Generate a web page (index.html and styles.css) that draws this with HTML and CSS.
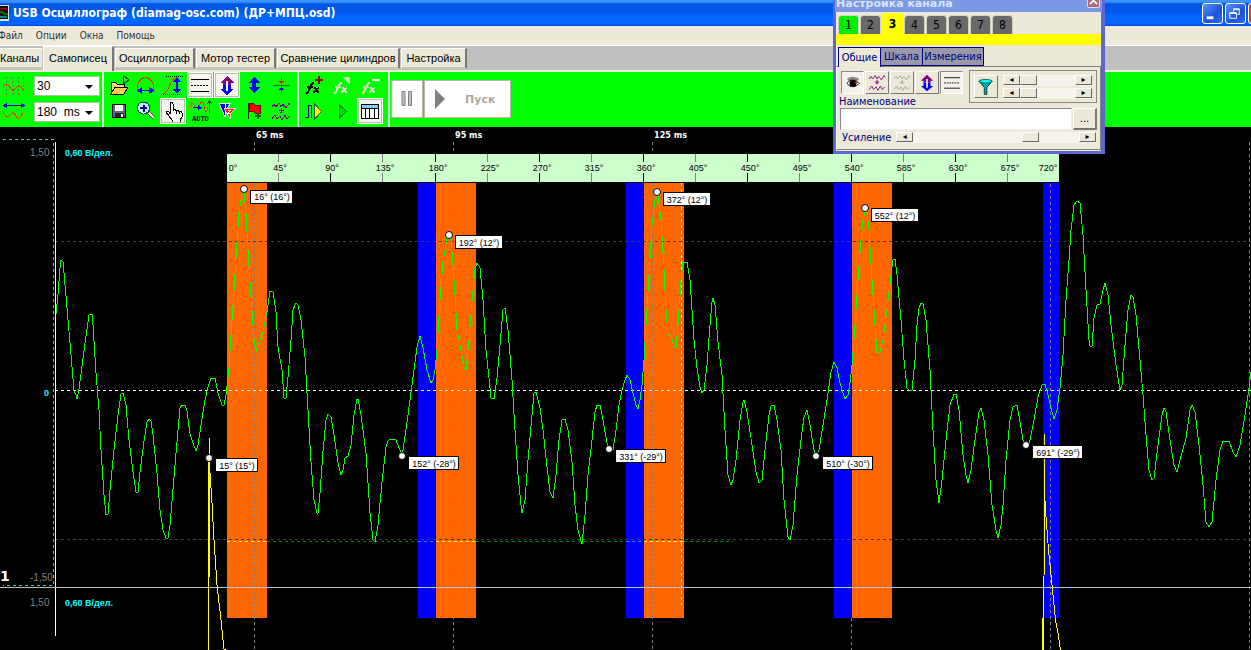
FILE: index.html
```html
<!DOCTYPE html>
<html lang="ru">
<head>
<meta charset="utf-8">
<title>USB Осциллограф</title>
<link rel="stylesheet" href="styles.css">
</head>
<body>
<svg class="defs" width="0" height="0" aria-hidden="true">
  <symbol id="updown" viewBox="0 0 24 24"><path d="M12 3l7 7h-3v2h-3v-4h-2v4H8v-2H5z" fill="#800080"/><path d="M12 22l7-6h-3v-4h-3v6h-2v-6H8v4H5z" fill="#00f"/></symbol>
  <symbol id="lines" viewBox="0 0 24 24"><path d="M3 6.500h18M3 18.500h18" stroke="#000"/><path d="M3 12.500h18" stroke="#000" stroke-dasharray="2 1"/></symbol>
  <symbol id="waves" viewBox="0 0 24 24"><path d="M3 8l2-3 2 3 3-4 2 4 2-3 3 4 3-5 1 2M3 20l3-4 2 4 3-3 2 4 3-5 2 4 3-3M12 9v5M9.500 11.500h5M11 13h2" fill="none" stroke="currentColor"/></symbol>
  <symbol id="fx" viewBox="0 0 24 24"><path d="M4 20c4 1 3-11 8-10M5 14h6M12 15c4-1 1 5 5 4M17 15c-2 0-3 4-6 4" fill="none" stroke="currentColor" stroke-width="2"/></symbol>
</svg>

<header class="titlebar">
  <svg class="app-icon" viewBox="0 0 9 16"><path d="M0 0h9v16H0z" fill="#ddd"/><path d="M0 1h8v13H0z" fill="#111"/><path d="M0 4h3l2-1 2 2" stroke="red" fill="none"/><path d="M0 7h3l1 2h4" stroke="#0c0" fill="none"/><path d="M0 12h7" stroke="#0ff"/></svg>
  <h1>USB Осциллограф (diamag-osc.com) (ДР+МПЦ.osd)</h1>
  <div class="win-buttons">
    <button class="win" aria-label="Свернуть"><svg viewBox="0 0 20 20"><path d="M4 13h7v3H4z" fill="#fff"/></svg></button>
    <button class="win" aria-label="Восстановить"><svg viewBox="0 0 20 20"><path d="M4 9h7v6H4zM8 8V5h6v6h-2M4 10h7M8 6h6" fill="none" stroke="#fff"/></svg></button>
    <button class="win close" aria-label="Закрыть"></button>
  </div>
</header>

<nav class="menu">
  <a href="#">Файл</a><a href="#">Опции</a><a href="#">Окна</a><a href="#">Помощь</a>
</nav>

<div class="tabs" role="tablist">
  <button role="tab" class="tab first">Каналы</button>
  <button role="tab" class="tab active" aria-selected="true">Самописец</button>
  <button role="tab" class="tab scope">Осциллограф</button>
  <button role="tab" class="tab motor">Мотор тестер</button>
  <button role="tab" class="tab compare">Сравнение цилиндров</button>
  <button role="tab" class="tab settings">Настройка</button>
</div>

<div class="toolbar">
  <div class="scales">
    <svg class="scale-icon" viewBox="0 2 24 20"><path d="M4.500 3v18M10.500 3v18M16.500 3v18M21.500 3v18" stroke="#488848" stroke-dasharray="2 2"/><path d="M1 14c2-4 4-5 6-2s3 6 6 3 5-5 8 1" fill="none" stroke="#f20"/></svg>
    <span class="combo"><select aria-label="Амплитуда"><option>30</option></select></span>
    <svg class="scale-icon" viewBox="0 2 24 20"><path d="M3 5.500h18" stroke="#00c"/><path d="M1 5.500l4-3v6zM23 5.500l-4-3v6z" fill="#00c"/><path d="M1 12c3 6 5 6 7 3s4-3 6 1 4 2 7-3" fill="none" stroke="#f20"/></svg>
    <span class="combo"><select aria-label="Развёртка"><option>180&nbsp; ms</option></select></span>
  </div>
  <div class="tools seven">
    <button class="tool" aria-label="Открыть"><svg viewBox="0 0 24 24"><path d="M4 21V9h4l2 2h7v3" fill="#ffd878" stroke="#000"/><path d="M4 21l4-7h13l-4 7z" fill="#ffd050" stroke="#000"/><path d="M16 2v9l6-4z" fill="#4c4" stroke="#050"/></svg></button>
    <button class="tool" aria-label="Ширина"><svg viewBox="0 0 24 24"><path d="M3 18c0-18 17-18 17 0M3 18v1M20 18v1" fill="none" stroke="#f20"/><path d="M4 17.500h15" stroke="#00f"/><path d="M3 17.500l5-4v8zM20 17.500l-5-4v8z" fill="#00f"/></svg></button>
    <button class="tool" aria-label="Высота"><svg viewBox="0 0 24 24"><path d="M2 21c7 0 6-17 15-17" fill="none" stroke="#f20"/><path d="M5 3.500h17M2 21.500h20" stroke="#000" stroke-dasharray="1 1"/><path d="M16 6v14" stroke="#00f" stroke-width="2"/><path d="M16 4l4 5h-8zM16 21l4-5h-8z" fill="#00f"/></svg></button>
    <button class="tool on" aria-label="Линии"><svg viewBox="0 0 24 24"><use href="#lines"/></svg></button>
    <button class="tool on" aria-label="По вертикали"><svg viewBox="0 0 24 24"><use href="#updown"/></svg></button>
    <button class="tool" aria-label="Сдвиг"><svg viewBox="0 0 24 24"><path d="M12 4l6 6h-4v4h4l-6 6-6-6h4v-4H6z" fill="#00f"/></svg></button>
    <button class="tool" aria-label="Центр"><svg viewBox="0 0 24 24"><path d="M12.500 4v17M4 12.500h17" stroke="#087808"/><path d="M12.500 4v6" stroke="red"/><path d="M10 8h5l-2.500 4z" fill="red"/><path d="M10 17h5l-2.500-4z" fill="#00f"/></svg></button>
    <button class="tool" aria-label="Сохранить"><svg viewBox="0 0 24 24"><path d="M5.500 5.500h13v13h-13z" fill="#668" stroke="#000"/><path d="M8 6h8v6H8z" fill="#fff"/><path d="M8 14h9v4H8z" fill="#222"/><path d="M14 15h2v3h-2z" fill="#fff"/></svg></button>
    <button class="tool" aria-label="Увеличить"><svg viewBox="0 0 24 24"><path d="M14 13l6 6" stroke="#555" stroke-width="4"/><path d="M15 14l5 5" stroke="#edc" stroke-width="2"/><circle cx="9.500" cy="9" r="6" fill="#c8eef8" stroke="#246"/><path d="M6 9h7M9.500 5.500v7" stroke="#00a" stroke-width="2"/></svg></button>
    <button class="tool on" aria-label="Рука"><svg viewBox="0 0 24 24"><path d="M9 15V5c0-2 3-2 3 0v7c0-2 3-2 3 0 0-1 3-1 3 1 0-1 3-1 3 1v4l-2 3v2h-8v-2l-6-8c0-2 3-1 4 2" fill="#fff" stroke="#000"/><path d="M15 12v3M18 13v2" stroke="#000"/></svg></button>
    <button class="tool" aria-label="Авто"><svg viewBox="0 0 24 24"><path d="M2 8c2-6 4-3 5 0M12 10c-1-8 3-9 4-3s3 8 4 1" fill="none" stroke="#f20"/><path d="M5 8.500h6" stroke="#00f"/><path d="M21.500 3v11M19 5l2.500-3L24 5" fill="none" stroke="#444"/><path d="M10 6l4 2.500-4 3z" fill="#00f"/><text class="auto" x="4" y="22">AUTO</text></svg></button>
    <button class="tool" aria-label="Маркеры"><svg viewBox="0 0 24 24"><path d="M4 4h12l-6 8v6z" fill="#00f" stroke="#ddf"/><path d="M9 9h12l-6 6v5z" fill="#f20" stroke="#fcc"/><path d="M10 5v4M13 11h3l-3 3h3" fill="none" stroke="#fff"/></svg></button>
    <button class="tool" aria-label="Флаг"><svg viewBox="0 0 24 24"><path d="M6.500 4v16" stroke="#030"/><path d="M7 4h4l2 2h5v8h-5l-2-2H7z" fill="red" stroke="#700"/><path d="M16 14v6M13 17h6" stroke="#060" stroke-width="2"/></svg></button>
    <button class="tool wave" aria-label="Волны"><svg viewBox="0 0 24 24"><use href="#waves"/></svg></button>
  </div>
  <div class="tools three">
    <button class="tool" aria-label="Добавить функцию"><svg viewBox="0 0 24 24"><use href="#fx"/><path d="M17 3v8M13 7h8" stroke="#900" stroke-width="2"/></svg></button>
    <button class="tool pale" aria-label="Изменить функцию"><svg viewBox="0 0 24 24"><use href="#fx"/><path d="M12 4h8v8z" fill="currentColor"/></svg></button>
    <button class="tool pale" aria-label="Удалить функцию"><svg viewBox="0 0 24 24"><use href="#fx"/><path d="M14 7h8" stroke="#eee" stroke-width="2"/></svg></button>
    <button class="tool" aria-label="Импульс"><svg viewBox="0 0 24 24"><path d="M3 18.500h3v-12h3v12" fill="none" stroke="#008"/><path d="M12.500 5v15l7-7.500z" fill="#ff0" stroke="#454"/></svg></button>
    <button class="tool" aria-label="Вперёд"><svg viewBox="0 0 24 24"><path d="M9.500 6v13l7-6.500z" fill="#0d0" stroke="#286828"/></svg></button>
    <button class="tool on" aria-label="Таблица"><svg viewBox="0 0 24 24"><path d="M3.500 5.500h17v14h-17z" fill="#fff" stroke="#000"/><path d="M4 6h16v3H4z" fill="#8cf"/><path d="M3 9.500h18M7.500 9v10M11.500 9v10M16.500 9v10" stroke="#000"/></svg></button>
  </div>
  <div class="run">
    <button class="run-btn pause" aria-label="Пауза"><svg viewBox="0 0 12 16"><path d="M1 .5h3v14H1zM7.500 .5h3v14h-3z" fill="#c0c0c0" stroke="#808080"/></svg></button>
    <button class="run-btn start"><svg viewBox="0 0 12 20"><path d="M1 0l10 10L1 20z" fill="#808080"/></svg><span>Пуск</span></button>
  </div>
</div>

<main class="chart">
<svg viewBox="0 127 1251 523" role="img" aria-label="Осциллограмма">
  <g class="crisp">
    <path class="zone-a" d="M227 183h40v435h-40zM436 183h40v435h-40zM644 183h40v435h-40zM852 183h40v435h-40z"/>
    <path class="zone-b" d="M418 183h17v435h-17zM626 183h17v435h-17zM834 183h17v435h-17zM1043 183h16v435h-16z"/>
    <path class="vgrid" d="M254.500 142V650M453.500 142V650M652.500 142V650M851.500 618V650M1050.500 142V650M1249.500 142V650"/>
    <path class="cursor" d="M681.500 183V605"/>
    <path class="scale" d="M227 154h832v28H227z"/>
    <path class="tick-minor" d="M278.500 154v8m0 11v9M382.500 154v8m0 11v9M487.500 154v8m0 11v9M591.500 154v8m0 11v9M695.500 154v8m0 11v9M799.500 154v8m0 11v9M903.500 154v8m0 11v9M1007.500 154v8m0 11v9"/>
    <path class="tick-major" d="M330.500 154v8m0 11v9M435.500 154v8m0 11v9M539.500 154v8m0 11v9M643.500 154v8m0 11v9M747.500 154v8m0 11v9M851.500 154v8m0 11v9M955.500 154v8m0 11v9"/>
    <path class="hgrid" d="M55 241.500H1251M55 539.500H1251"/>
    <path class="zero" d="M55 390.500H1251"/>
    <path class="level" d="M267 541.500H418M476 541.500H626M684 541.500H733"/>
    <path class="level-a" d="M227 541.500h40M436 541.500h40M644 541.500h40"/>
    <path class="level-b" d="M418 541.500h17M626 541.500h17"/>
    <path class="bound" d="M3 139.500H53.500V585.500H3"/>
    <path class="axis" d="M55.500 142V636"/>
    <path class="divider" d="M0 587.500H1251"/>
    <path class="sync" d="M209.500 438V577M208.500 462V650M210 473l2 30 2 37 3 45 4 35 3 29 2 1M1044.500 434V575M1043.500 576V650M1042.500 618V650M1044.500 490l1 20 3 40 4 40 3 30 2 10 3 20"/>
    <polyline class="signal" points="56,314 58,294 60,268 61,260 63,262 66,296 70,343 74,391 76,395 77,399 79,389 82,366 86,336 89,315 92,314 93,325 96,373 99,410 101,450 104,495 106,515 108,514 110,490 114,450 118,415 121,394 123,393 126,405 129,440 133,472 136,492 138,492 140,472 144,441 147,422 149,419 151,421 153,435 157,473 160,510 163,530 166,538 168,538 170,525 174,477 178,430 180,408 182,405 185,405 187,411 190,434 193,443 196,451 198,445 201,425 205,400 208,387 211,378 215,378 218,393 222,405 224,405 226,395 229,368 231,335 234,290 237,242 239,212 242,194 244,192 246,213 248,250 251,297 254,339 256,352 258,345 263,332 267,312 270,291 273,292 276,312 278,347 282,370 284,398 286,398 288,377 291,340 293,310 295,305 296,303 298,305 301,320 305,357 308,410 311,462 314,500 317,513 318,513 320,493 323,451 326,420 328,414 331,417 334,435 338,463 341,475 343,470 345,458 348,456 351,445 354,415 357,399 358,399 361,415 366,453 370,513 373,540 375,542 378,525 382,482 386,447 388,441 390,439 396,440 399,448 402,454 403,450 408,415 412,385 417,347 420,336 423,348 427,370 431,383 433,380 435,370 437,350 440,300 443,262 447,238 448,231 451,240 453,265 455,295 457,330 460,345 464,367 466,370 469,340 473,290 475,268 477,263 480,268 483,300 486,350 489,378 491,398 494,399 497,378 500,345 503,310 505,308 508,330 512,380 515,430 518,475 521,505 522,513 525,500 528,460 532,415 534,393 536,392 538,400 540,408 543,430 547,467 550,492 553,498 556,475 559,440 562,420 565,419 568,430 572,462 575,505 578,530 582,544 585,515 588,475 592,440 595,412 597,405 600,405 603,420 607,443 609,448 613,450 616,430 619,405 622,390 625,380 627,375 630,380 633,393 636,405 638,409 640,400 642,385 644,360 646,325 649,275 652,225 655,200 658,196 661,220 664,270 666,310 668,334 671,336 674,346 676,348 678,325 681,280 683,262 687,262 690,280 694,340 697,368 700,387 702,393 704,390 707,365 710,325 712,302 713,298 715,305 718,342 722,375 725,430 728,475 731,485 733,480 736,460 740,420 743,402 744,400 747,412 752,445 756,472 759,483 762,480 765,450 769,415 771,406 774,405 777,420 781,450 784,500 788,537 790,540 793,525 797,475 801,440 804,417 807,410 810,425 814,450 816,456 819,450 823,425 827,400 831,372 834,362 837,368 840,383 843,393 845,399 848,395 850,383 852,365 855,325 858,280 861,240 863,220 865,212 867,212 869,230 872,280 875,325 877,352 880,352 883,340 887,310 891,275 893,260 895,259 897,275 901,320 904,360 907,388 909,390 912,390 915,360 917,325 919,308 921,303 923,304 926,320 930,370 933,430 936,480 939,503 942,480 946,440 950,405 954,394 956,394 959,410 963,455 966,475 968,483 971,470 975,440 979,412 981,408 984,420 988,455 992,505 996,530 998,538 1001,525 1003,505 1006,460 1010,420 1013,407 1017,405 1020,422 1023,440 1027,448 1030,440 1034,420 1038,397 1042,385 1045,384 1048,395 1051,408 1054,419 1057,410 1060,388 1063,355 1066,300 1069,260 1071,230 1074,205 1077,201 1080,203 1083,235 1086,290 1089,340 1090,346 1092,346 1094,318 1097,305 1100,304 1103,290 1105,283 1108,295 1111,325 1116,365 1120,390 1122,385 1125,345 1128,310 1131,295 1133,297 1136,315 1140,360 1143,395 1146,435 1149,470 1152,480 1154,478 1158,445 1162,415 1164,408 1166,412 1170,440 1174,465 1177,472 1180,460 1186,438 1190,410 1192,405 1195,412 1199,445 1203,485 1206,522 1209,527 1212,522 1216,480 1220,450 1223,441 1229,441 1233,452 1236,457 1240,445 1245,415 1249,388 1251,372"/>
  </g>
  <g class="marks">
    <circle cx="244" cy="189" r="3.500"/><circle cx="449" cy="235" r="3.500"/><circle cx="657" cy="192" r="3.500"/><circle cx="865" cy="208" r="3.500"/>
    <circle cx="209" cy="458" r="3.500"/><circle cx="402" cy="456" r="3.500"/><circle cx="609" cy="449" r="3.500"/><circle cx="816" cy="456" r="3.500"/><circle cx="1026" cy="445" r="3.500"/>
  </g>
  <g class="tag-boxes crisp">
    <path d="M250.500 190.500h42v13h-42zM455.500 235.500h47v13h-47zM663.500 192.500h47v13h-47zM871.500 208.500h47v13h-47zM215.500 458.500h42v13h-42zM408.500 456.500h50v13h-50zM615.500 449.500h50v13h-50zM822.500 456.500h50v13h-50zM1032.500 445.500h50v13h-50z"/>
  </g>
  <g class="small tag-text">
    <text x="272" y="200">16° (16°)</text><text x="479" y="246">192° (12°)</text><text x="687" y="203">372° (12°)</text><text x="895" y="219">552° (12°)</text>
    <text x="237" y="469">15° (15°)</text><text x="434" y="467">152° (-28°)</text><text x="641" y="460">331° (-29°)</text><text x="848" y="467">510° (-30°)</text><text x="1058" y="456">691° (-29°)</text>
  </g>
  <g class="small degrees">
    <text x="233" y="171">0°</text><text x="280" y="171">45°</text><text x="332" y="171">90°</text><text x="385" y="171">135°</text><text x="438" y="171">180°</text><text x="490" y="171">225°</text><text x="542" y="171">270°</text><text x="594" y="171">315°</text><text x="646" y="171">360°</text><text x="698" y="171">405°</text><text x="750" y="171">450°</text><text x="802" y="171">495°</text><text x="854" y="171">540°</text><text x="906" y="171">585°</text><text x="958" y="171">630°</text><text x="1010" y="171">675°</text><text x="1048" y="171">720°</text>
  </g>
  <g class="times"><text x="256" y="138">65 ms</text><text x="455" y="138">95 ms</text><text x="654" y="138">125 ms</text></g>
  <g class="volts"><text x="65" y="156">0,60 В/дел.</text><text x="65" y="606">0,60 В/дел.</text><text x="44" y="396">0</text></g>
  <g class="limits"><text x="30" y="156">1,50</text><text x="30" y="581">-1,50</text><text x="30" y="606">1,50</text></g>
  <text class="channel-no" x="0" y="581">1</text>
</svg>
</main>

<section class="dialog" aria-label="Настройка канала">
  <div class="dlg-title"><h2>Настройка канала</h2><button aria-label="Закрыть"><svg viewBox="0 0 10 10"><path d="M1 1l8 8M9 1L1 9" stroke="#fff" stroke-width="2"/></svg></button></div>
  <div class="channels">
    <button class="ch green">1</button><button class="ch">2</button><button class="ch current">3</button><button class="ch">4</button><button class="ch">5</button><button class="ch">6</button><button class="ch">7</button><button class="ch">8</button>
  </div>
  <div class="ch-bar"></div>
  <div class="pages"><button class="page active">Общие</button><button class="page">Шкала</button><button class="page wide">Измерения</button></div>
  <div class="panel">
    <div class="top">
      <div class="left">
        <div class="icons">
          <button class="ib down" aria-label="Видимость"><svg viewBox="0 0 24 24"><path d="M5 8c5-4 10-3 14 0l-2 2H7z" fill="#888"/><path d="M5 13c3-5 10-5 14 0-4 5-10 5-14 0z" fill="#fff" stroke="#000"/><circle cx="12" cy="13" r="4"/><path d="M14 12h3" stroke="#c20" stroke-width="2"/></svg></button>
          <button class="ib wave" aria-label="Волны"><svg viewBox="0 0 24 24"><use href="#waves"/></svg></button>
          <button class="ib dim" aria-label="Сжатие"><svg viewBox="0 0 24 24"><use href="#waves"/></svg></button>
          <button class="ib" aria-label="По вертикали"><svg viewBox="0 0 24 24"><use href="#updown"/></svg></button>
          <button class="ib down" aria-label="Линии"><svg viewBox="0 0 24 24"><use href="#lines"/></svg></button>
        </div>
        <label for="name">Наименование</label>
      </div>
      <div class="filter">
        <button class="ib" aria-label="Фильтр"><svg viewBox="0 0 24 24"><path d="M4 6l6 7v8h3v-8l6-7z" fill="#0aa" stroke="#033"/><ellipse cx="11.500" cy="6" rx="7.500" ry="2" fill="#0ff" stroke="#055"/></svg></button>
        <div class="filter-bars">
          <div class="scroll"><button aria-label="Меньше">◂</button><input type="range" value="0" aria-label="Нижняя частота"><button aria-label="Больше">▸</button></div>
          <div class="scroll"><button aria-label="Меньше">◂</button><input type="range" value="0" aria-label="Верхняя частота"><button aria-label="Больше">▸</button></div>
        </div>
      </div>
    </div>
    <div class="name-row"><input id="name" type="text"><button class="more" aria-label="Выбрать">...</button></div>
    <div class="gain-row"><label for="gain">Усиление</label><div class="scroll"><button aria-label="Меньше">◂</button><input id="gain" type="range" value="73"><button aria-label="Больше">▸</button></div></div>
  </div>
</section>
</body>
</html>
```

FILE: styles.css
```css
* { box-sizing: border-box; }
body {
  margin: 0;
  min-height: 100vh;
  display: flex;
  flex-direction: column;
  position: relative;
  overflow: hidden;
  background: #000;
  font: 11px "DejaVu Sans Condensed", "DejaVu Sans", sans-serif;
  color: #000;
}
button, input, select { font: inherit; color: inherit; margin: 0; padding: 0; border: 0; border-radius: 0; }
button { background: none; }
svg { display: block; }
.defs { position: absolute; }

.titlebar {
  height: 26px;
  display: flex;
  align-items: center;
  gap: 4px;
  overflow: hidden;
  background: linear-gradient(#3a94ff 0, #3a94ff 2px, #0054e3 4px, #0058ea 13px, #0066ff 15px, #0066ff 24px, #0044c8 26px);
}
.app-icon { width: 9px; height: 16px; }
.titlebar h1 { margin: 0; flex: 1; font: bold 12px "DejaVu Sans Condensed", "DejaVu Sans", sans-serif; color: #fff; white-space: nowrap; }
.win-buttons { display: flex; gap: 2px; margin-right: -18px; }
.win { width: 21px; height: 21px; border: 1px solid #fff; border-radius: 3px; background: linear-gradient(135deg, #5c96f8, #1c52d8 60%, #2c6cf0); }
.win.close { background: #e0441c; }

.menu { height: 20px; display: flex; align-items: center; gap: 13px; background: #ece9d8; border-bottom: 1px solid #fff; font-size: 10px; }
.menu a { color: #333; text-decoration: none; }
.menu a:first-child { margin-left: -2px; }

.tabs {
  height: 26px;
  display: flex;
  align-items: flex-end;
  gap: 1px;
  background: #c0c0c0;
  border-bottom: 2px solid #ece9d8;
  font: 11px "Liberation Sans", sans-serif;
}
.tab { height: 21px; margin-bottom: 1px; white-space: nowrap; background: #ece9d8; border-top: 1px solid #fff; border-left: 1px solid #fff; border-right: 2px solid #777; border-bottom: 2px solid #c8c5b8; }
.tab.first { width: 42px; border-right: 0; border-left: 0; text-align: left; }
.tab.active { width: 71px; height: 25px; margin-bottom: -1px; padding-bottom: 3px; border-bottom: 0; }
.tab.scope, .tab.motor { width: 80px; }
.tab.compare { width: 123px; }
.tab.settings { width: 66px; }

.toolbar { height: 55px; display: flex; background: #0f0; }
.scales { width: 104px; display: grid; grid-template-columns: 24px 66px; grid-template-rows: 20px 20px; column-gap: 8px; row-gap: 6px; padding: 4px 0 0 2px; border-right: 2px solid #e8e8d8; }
.scale-icon { width: 24px; height: 20px; shape-rendering: crispEdges; }
.combo { position: relative; display: block; }
.combo select { appearance: none; width: 100%; height: 20px; padding-left: 2px; background: #fff; border: 1px solid #a8c8a0; font-family: "Liberation Sans", sans-serif; font-size: 12px; }
.combo::after { content: ""; position: absolute; right: 7px; top: 9px; border: 4px solid transparent; border-top-color: #000; border-bottom: 0; }
.tools { display: grid; grid-auto-rows: 26px; align-content: start; padding: 0 1px 0 2px; border-right: 2px solid #e8e8d8; }
.tools.seven { grid-template-columns: repeat(7, 27px); width: 195px; }
.tools.three { grid-template-columns: repeat(3, 28px); width: 91px; }
.tool { width: 26px; height: 26px; border: 1px solid transparent; }
.tool svg { width: 24px; height: 24px; shape-rendering: crispEdges; }
.tool.on { background: #f6f6ee; border-color: #fff; outline: 1px solid #a8c8a0; outline-offset: -2px; }
.wave { color: #800080; }
.dim { color: #a8a894; }
.pale { color: #d0d8b8; }
.auto { font: bold 7px "Liberation Mono", monospace; }
.run { display: flex; gap: 1px; padding: 8px 0 0 1px; align-items: flex-start; }
.run-btn { height: 38px; background: #fff; border: 1px solid #b8b8a8; }
.pause { width: 32px; display: grid; place-items: center; }
.pause svg { width: 12px; height: 16px; }
.start { width: 87px; display: flex; align-items: center; gap: 19px; padding-left: 9px; color: #aca899; font: bold 11px "DejaVu Sans", sans-serif; }
.start svg { width: 12px; height: 20px; }

.chart { flex: 1; min-height: 0; overflow: hidden; }
.chart > svg { width: 100%; height: auto; }
.crisp { shape-rendering: crispEdges; }
.crisp path, .signal { fill: none; stroke-width: 1; }
.crisp .zone-a { fill: #f60; }
.crisp .zone-b { fill: #00f; }
.crisp .scale { fill: #cfc; }
.vgrid { stroke: #808080; stroke-dasharray: 3 3; }
.cursor { stroke: #ffe060; stroke-dasharray: 3 3; }
.tick-minor { stroke: #808080; }
.tick-major { stroke: #000; }
.hgrid { stroke: #3c3c3c; stroke-dasharray: 3 3; }
.zero { stroke: #fff; stroke-dasharray: 3 3; }
.level { stroke: #080; stroke-dasharray: 3 3; }
.level-a { stroke: #ff0; stroke-dasharray: 3 3; }
.level-b { stroke: #08f; stroke-dasharray: 3 3; }
.bound { stroke: #4cc; stroke-dasharray: 3 3; }
.axis { stroke: #fff; }
.divider { stroke: #c0c0c0; }
.sync { stroke: #ff0; }
.signal { stroke: #0f0; }
.marks circle { fill: #fff; stroke: #000; }
.crisp.tag-boxes path { fill: #fff; stroke: #000; }
.small { font: 9px "Liberation Sans", sans-serif; text-anchor: middle; }
.times { font: bold 9px "DejaVu Sans Condensed", "DejaVu Sans", sans-serif; fill: #fff; }
.volts { font: bold 9px "Liberation Sans", sans-serif; fill: #0ff; }
.limits { font: 10px "Liberation Sans", sans-serif; fill: #808080; }
.channel-no { font: bold 14px "DejaVu Sans", sans-serif; fill: #fff; }

.dialog { position: absolute; left: 833px; top: -8px; width: 272px; background: #ece9d8; border: 3px solid #5a68d0; border-top: 0; border-right-width: 4px; color: #000080; }
.dlg-title { height: 20px; margin: 0 -1px; padding-left: 1px; display: flex; justify-content: space-between; align-items: flex-end; background: #7b98e4; }
.dlg-title h2 { margin: 0; font: bold 11px/17px "DejaVu Sans", sans-serif; color: #d8e4f8; }
.dlg-title button { width: 13px; height: 15px; margin: 0 2px 4px 0; display: grid; place-items: center; background: #b06878; border: 1px solid #dde; border-radius: 2px; }
.dlg-title button svg { width: 9px; height: 9px; }
.channels { height: 22px; display: flex; align-items: flex-end; gap: 1px; padding-left: 2px; color: #000; }
.ch { width: 21px; height: 19px; background: #696969; border: 1px solid #d0d0c0; border-bottom: 0; border-radius: 4px 4px 0 0; font-size: 12px; }
.ch.green { background: #0e0; }
.ch.current { width: 23px; height: 21px; margin: 0 -1px; background: #ff0; border-color: #ff0; font-weight: bold; }
.ch-bar { height: 11px; background: #ff0; }
.pages { display: flex; align-items: flex-start; padding: 2px 0 0 2px; height: 21px; }
.page { width: 43px; height: 19px; margin-right: -1px; background: #9898a8; border: 1px solid #000080; color: #000080; }
.page.active { height: 20px; background: #ece9d8; border-bottom: 0; }
.page.wide { width: 62px; }
.panel { border: 1px solid #808080; border-left-color: #fff; padding: 3px 3px 5px 4px; margin-bottom: 1px; }
.top { display: flex; justify-content: space-between; height: 38px; }
.left { display: flex; flex-direction: column; }
.icons { display: flex; gap: 1px; padding-top: 1px; }
.ib { width: 24px; height: 23px; border: 1px solid #fff; border-right-color: #777; border-bottom-color: #777; background: #ece9d8; }
.ib svg { width: 22px; height: 21px; }
.ib.down { width: 23px; background: #f4f2ea; border-color: #888 #fff #fff #888; }
.left label { line-height: 15px; margin-left: -2px; }
.filter { width: 128px; height: 33px; display: flex; align-items: center; gap: 5px; padding: 0 4px; border: 1px solid #888; }
.filter-bars { flex: 1; display: grid; gap: 2px; }
.scroll { display: flex; flex: 1; height: 11px; background: #f6f4ec; }
.scroll button { width: 17px; height: 10px; background: #ece9d8; border: 1px solid #fff; border-right-color: #666; border-bottom-color: #666; color: #000; font: 8px/8px "DejaVu Sans", sans-serif; }
.scroll input { appearance: none; flex: 1; min-width: 0; width: 20px; height: 10px; background: none; }
.scroll input::-webkit-slider-thumb { appearance: none; width: 17px; height: 10px; background: #ece9d8; border: 1px solid #fff; border-right-color: #666; border-bottom-color: #666; }
.name-row { display: flex; gap: 1px; height: 22px; margin-left: -1px; }
.name-row input { flex: 1; min-width: 0; padding: 0 3px; background: #fff; border: 1px solid #888; border-right-color: #eee; border-bottom-color: #eee; }
.more { width: 24px; background: #ece9d8; border: 1px solid #fff; border-right: 2px solid #777; border-bottom: 2px solid #777; color: #000; }
.gain-row { display: flex; align-items: center; gap: 5px; padding: 1px 1px 0 1px; height: 14px; }
```
